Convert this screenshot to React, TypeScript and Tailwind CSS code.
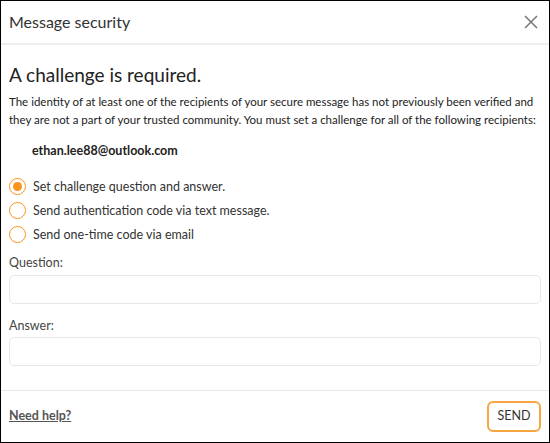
import React, { useState } from "react";

const options = [
  "Set challenge question and answer.",
  "Send authentication code via text message.",
  "Send one-time code via email",
];

const Radio = ({ checked }: { checked: boolean }) => (
  <span className="flex items-center justify-center w-[17px] h-[17px] rounded-full border-[1.5px] border-[#f7941d] bg-white">
    {checked && <span className="w-[9px] h-[9px] rounded-full bg-[#f7941d]" />}
  </span>
);

export default function App() {
  const [selected, setSelected] = useState(0);

  return (
    <div
      className="w-[550px] h-[443px] bg-white border border-black flex flex-col text-[#222]"
      style={{ fontFamily: "Lato, 'Noto Sans', sans-serif" }}
    >
      <div className="flex items-center justify-between h-[44px] pl-2 pr-[10px] border-b-2 border-[#efefef]">
        <span className="text-[16px] text-[#333]">Message security</span>
        <svg width="16" height="16" viewBox="0 0 16 16" className="text-[#777]">
          <path d="M2 2l12 12M14 2L2 14" stroke="currentColor" strokeWidth="1.5" />
        </svg>
      </div>

      <div className="flex-1 px-2 pt-[18px]">
        <h1 className="text-[19px] leading-[24px] text-[#222]">A challenge is required.</h1>
        <p className="mt-[6px] text-[11.5px] leading-[18px] text-[#222] whitespace-nowrap">
          The identity of at least one of the recipients of your secure message has not previously been verified and
          <br />
          they are not a part of your trusted community. You must set a challenge for all of the following recipients:
        </p>
        <div className="mt-[13px] pl-[23px] text-[12.5px] font-bold text-[#222]">ethan.lee88@outlook.com</div>

        <div className="mt-[17px] flex flex-col gap-[7px]">
          {options.map((o, i) => (
            <label key={o} className="flex items-center gap-[7px] cursor-pointer" onClick={() => setSelected(i)}>
              <Radio checked={selected === i} />
              <span className="text-[12.5px] leading-[17px] text-[#333]">{o}</span>
            </label>
          ))}
        </div>

        <div className="mt-[11px] text-[12.5px] text-[#444]">Question:</div>
        <input className="mt-[2px] w-full h-[29px] rounded-[5px] border border-[#e6e7eb] outline-none px-2 text-[12px]" />
        <div className="mt-[13px] text-[12.5px] text-[#444]">Answer:</div>
        <input className="mt-[2px] w-full h-[29px] rounded-[5px] border border-[#e6e7eb] outline-none px-2 text-[12px]" />
      </div>

      <div className="flex items-center justify-between h-[52px] px-2 border-t border-[#e5eaf0]">
        <a href="#" className="text-[12.5px] font-bold text-[#555] underline">Need help?</a>
        <button className="w-[54px] h-[31px] rounded-[6px] border-2 border-[#f7a642] text-[12.5px] text-[#333]">
          SEND
        </button>
      </div>
    </div>
  );
}
